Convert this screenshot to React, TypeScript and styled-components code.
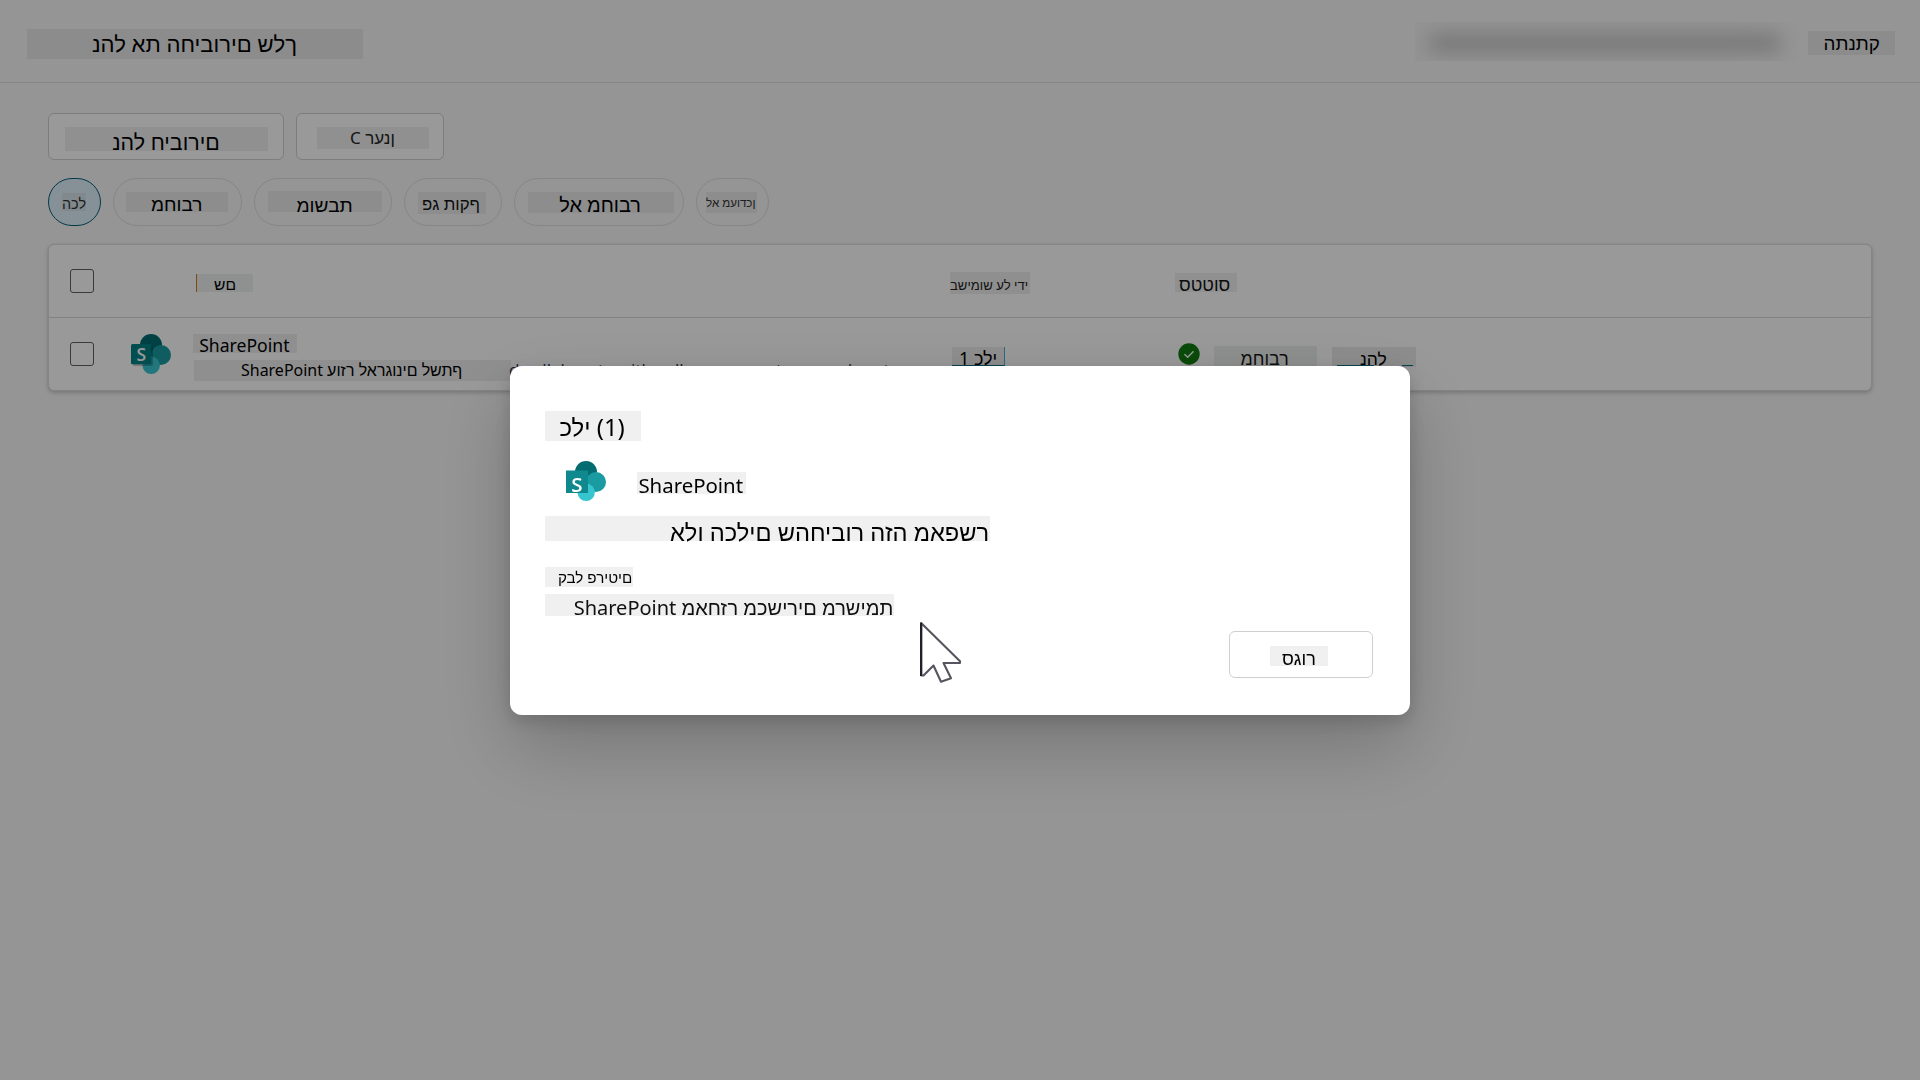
import React from 'react';
import styled, { createGlobalStyle } from 'styled-components';

const GlobalStyle = createGlobalStyle`
  * { box-sizing: border-box; }
  html, body { margin: 0; padding: 0; }
  body {
    background: #f8f8f8;
    font-family: "Noto Sans", "Liberation Sans", sans-serif;
    color: #000;
    overflow: hidden;
  }
`;

const Page = styled.div`
  width: 1920px;
  height: 1080px;
  display: flex;
  flex-direction: column;
  overflow: hidden;
  background: #f8f8f8;
`;

/* A caption on its own tinted strip; base is the baseline measured from the strip's top. */
interface StripProps {
  $w: number;
  $h: number;
  $x: number;
  $base: number;
  $size: number;
  $bg?: string;
  $mt?: number;
  $ml?: number;
  $ink?: string;
}

const Strip = styled.div<StripProps>`
  flex: none;
  width: ${(p) => p.$w}px;
  height: ${(p) => p.$h}px;
  margin: ${(p) => p.$mt ?? 0}px 0 0 ${(p) => p.$ml ?? 0}px;
  padding-left: ${(p) => p.$x}px;
  background: ${(p) => p.$bg ?? '#f0f0f0'};
  color: ${(p) => p.$ink ?? '#000'};
  font-size: ${(p) => p.$size}px;
  line-height: ${(p) => (2 * (p.$base - 0.388 * p.$size)).toFixed(2)}px;
  direction: ltr;
  unicode-bidi: bidi-override;
  white-space: nowrap;
`;

const NameHeading = styled(Strip)`
  border-left: 1px solid #d9751c;
`;

const ToolLink = styled(Strip)`
  border-right: 1px solid #45b4dc;
  border-bottom: 1px solid #0b6f8c;
`;

const ManageLink = styled(Strip)`
  background-image: linear-gradient(#0b6f8c, #0b6f8c), linear-gradient(#0b6f8c, #0b6f8c);
  background-repeat: no-repeat;
  background-size: 37px 1px, 11px 1px;
  background-position: 5px 18px, 70px 18px;
`;

const TopBar = styled.header`
  flex: none;
  display: flex;
  align-items: flex-start;
  height: 83px;
  padding: 0 25px 0 27px;
  border-bottom: 1px solid #dfdfdf;
`;

const Account = styled.div`
  display: flex;
  align-items: center;
  width: 387px;
  height: 39px;
  margin: 22px 6px 0 auto;
  padding-left: 14px;
  background: linear-gradient(90deg, #f5f5f5 80%, #f8f8f8);
  overflow: hidden;
`;

const AccountBlur = styled.div`
  width: 352px;
  height: 20px;
  margin-top: 3px;
  background: #cacaca;
  border-radius: 8px;
  filter: blur(9px);
`;

const Main = styled.main`
  display: flex;
  flex-direction: column;
  gap: 18px;
  padding: 30px 48px 0;
`;

const Cluster = styled.div`
  display: flex;
  gap: 12px;
`;

const Button = styled.button<{ $w: number; $edge?: string }>`
  display: flex;
  align-items: flex-start;
  width: ${(p) => p.$w}px;
  height: 47px;
  padding: 0;
  background: #fff;
  border: 1px solid ${(p) => p.$edge ?? '#d1d1d1'};
  border-radius: 6px;
  font-family: inherit;
  text-align: left;
`;

const Pill = styled.button<{ $w: number; $active?: boolean }>`
  display: flex;
  align-items: flex-start;
  width: ${(p) => p.$w}px;
  height: 48px;
  padding: 0;
  background: ${(p) => (p.$active ? '#def2fb' : 'transparent')};
  border: 1px solid ${(p) => (p.$active ? '#07607c' : '#e0e0e0')};
  border-radius: 24px;
  font-family: inherit;
  text-align: left;
`;

const Table = styled.section`
  border: 1px solid #dedede;
  border-radius: 6px;
  background: #fff;
  box-shadow: 0 2px 4px rgba(0, 0, 0, 0.18), 0 0 2px rgba(0, 0, 0, 0.1);
  overflow: hidden;
`;

const Row = styled.div<{ $head?: boolean }>`
  display: grid;
  grid-template-columns: 82px 62px 757px 224px 1fr;
  height: ${(p) => (p.$head ? 73 : 72)}px;
  border-bottom: ${(p) => (p.$head ? '1px solid #d9d9d9' : 'none')};
`;

const Cell = styled.div`
  display: flex;
  align-items: flex-start;
  min-width: 0;
`;

const NameCell = styled.div`
  display: flex;
  flex-direction: column;
  gap: 7px;
  min-width: 0;
  padding-top: 16px;
`;

const Line = styled.div`
  display: flex;
`;

const Check = styled.span`
  width: 24px;
  height: 24px;
  margin: 24px 0 0 21px;
  border: 1px solid #616161;
  border-radius: 3px;
`;

const Overflowing = styled.span`
  margin-left: -2px;
  font: 17.1px/19.4px "Open Sans", sans-serif;
  white-space: nowrap;
  color: #2b3350;
`;

const IconSlot = styled.div<{ $mt?: number; $ml?: number }>`
  flex: none;
  display: flex;
  margin: ${(p) => p.$mt ?? 0}px 0 0 ${(p) => p.$ml ?? 0}px;
`;

const Backdrop = styled.div`
  position: fixed;
  inset: 0;
  display: flex;
  align-items: flex-start;
  justify-content: center;
  padding-top: 366px;
  background: rgba(0, 0, 0, 0.4);
`;

const Dialog = styled.div`
  display: flex;
  flex-direction: column;
  width: 900px;
  height: 349px;
  padding: 45px 37px 37px 35px;
  background: #fff;
  border-radius: 12px;
  box-shadow: 0 6px 18px rgba(0, 0, 0, 0.16), 0 32px 76px rgba(0, 0, 0, 0.21);
`;

const ToolRow = styled.div`
  display: flex;
  margin: 20px 0 15px;
  padding-left: 21px;
  height: 40px;
`;

const Footer = styled.div`
  display: flex;
  justify-content: flex-end;
  margin-top: 15px;
`;

const Pointer = styled.svg`
  position: fixed;
  left: 916px;
  top: 618px;
`;

const SharePointIcon = ({ large }: { large?: boolean }) => (
  <svg width="40" height="40" viewBox="0 0 40 40">
    <circle cx="20" cy="11" r="11" fill="#036c70" />
    <circle cx="30" cy="21" r="10" fill="#1a9ba1" />
    <circle cx="20.2" cy="31.3" r="8.7" fill="#37c6d0" />
    {large ? (
      <rect x="0" y="9.5" width="22" height="22.5" fill="#0f898d" />
    ) : (
      <>
        <rect x="1.5" y="11.5" width="20.5" height="20.5" rx="2" fill="#000" opacity="0.22" />
        <rect x="0" y="10" width="20.3" height="20.3" rx="1.5" fill="#038387" />
      </>
    )}
    <text
      x={large ? 11 : 10.2}
      y={large ? 31 : 26.7}
      textAnchor="middle"
      fontFamily="Open Sans, sans-serif"
      fontWeight="600"
      fontSize={large ? 20.5 : 17.5}
      fill="#fff"
    >
      S
    </text>
  </svg>
);

export default function App() {
  return (
    <>
      <GlobalStyle />
      <Page>
        <TopBar>
          <Strip $w={336} $h={30} $mt={29} $x={65} $base={23.2} $size={22.1} $bg="#e9e9e9">נהל את החיבורים שלך</Strip>
          <Account><AccountBlur /></Account>
          <Strip $w={87} $h={24} $mt={31} $x={15.6} $base={20} $size={18.8} $bg="#e9e9e9">התנתק</Strip>
        </TopBar>
        <Main>
          <Cluster>
            <Button $w={236}>
              <Strip $w={203} $h={24} $mt={13} $ml={16} $x={47.3} $base={23.7} $size={21.4} $bg="#f1f1f1">נהל חיבורים</Strip>
            </Button>
            <Button $w={148}>
              <Strip $w={112} $h={22} $mt={13} $ml={20} $x={33} $base={17.5} $size={17} $bg="#f1f1f1" $ink="#262626">C רענן</Strip>
            </Button>
          </Cluster>
          <Cluster>
            <Pill $w={53} $active>
              <Strip $w={24} $h={18} $mt={14} $ml={13} $x={0} $base={16.5} $size={14.4} $bg="#d7e5ec" $ink="#333">הכל</Strip>
            </Pill>
            <Pill $w={129}>
              <Strip $w={102} $h={20} $mt={13} $ml={12} $x={25} $base={20.3} $size={19} $bg="#ebebeb">מחובר</Strip>
            </Pill>
            <Pill $w={138}>
              <Strip $w={114} $h={21} $mt={12} $ml={13} $x={28.5} $base={21.5} $size={19.1} $bg="#ebebeb">מושבת</Strip>
            </Pill>
            <Pill $w={98}>
              <Strip $w={68} $h={22} $mt={13} $ml={13} $x={4} $base={18.3} $size={16.8} $bg="#ebebeb" $ink="#141414">פג תוקף</Strip>
            </Pill>
            <Pill $w={170}>
              <Strip $w={146} $h={21} $mt={13} $ml={13} $x={31.3} $base={21} $size={19.9} $bg="#ebebeb">לא מחובר</Strip>
            </Pill>
            <Pill $w={73}>
              <Strip $w={51} $h={21} $mt={13} $ml={9} $x={0} $base={15.3} $size={11.6} $bg="#ebebeb" $ink="#333">לא מעודכן</Strip>
            </Pill>
          </Cluster>
          <Table>
            <Row $head>
              <Cell><Check /></Cell>
              <Cell />
              <Cell>
                <NameHeading $w={57} $h={18} $mt={29} $ml={3} $x={17} $base={16.8} $size={15.6} $bg="#eff2f2">שם</NameHeading>
              </Cell>
              <Cell>
                <Strip $w={80} $h={22} $mt={27} $x={0} $base={18.5} $size={13.1} $bg="#efefef" $ink="#222">בשימוש על ידי</Strip>
              </Cell>
              <Cell>
                <Strip $w={62} $h={19} $mt={28} $ml={1} $x={4} $base={18.5} $size={17.8} $bg="#f0f0f0" $ink="#141414">סטטוס</Strip>
              </Cell>
            </Row>
            <Row>
              <Cell><Check /></Cell>
              <Cell><IconSlot $mt={16}><SharePointIcon /></IconSlot></Cell>
              <NameCell>
                <Strip $w={104} $h={19} $x={6.2} $base={18.7} $size={17.6} $bg="#efefef">SharePoint</Strip>
                <Line>
                  <Strip $w={317} $h={21} $ml={1} $x={47} $base={17} $size={15.98} $bg="#efefef">SharePoint עוזר לארגונים לשתף</Strip>
                  <Overflowing>d collaborate with colleagues, partners and customers</Overflowing>
                </Line>
              </NameCell>
              <Cell>
                <ToolLink $w={53} $h={19} $mt={29} $ml={2} $x={7} $base={18} $size={18} $bg="#eee">1 כלי</ToolLink>
              </Cell>
              <Cell>
                <IconSlot $mt={25} $ml={4}>
                  <svg width="22" height="22" viewBox="0 0 22 22">
                    <circle cx="11" cy="11" r="10.7" fill="#107c10" />
                    <path d="M6.8 11.4l2.9 2.9 5.4-5.6" fill="none" stroke="#fff" strokeWidth="1.4" strokeLinecap="round" strokeLinejoin="round" />
                  </svg>
                </IconSlot>
                <Strip $w={103} $h={20} $mt={28} $ml={14} $x={26.5} $base={19.5} $size={17.8} $bg="#edf0ef" $ink="#181818">מחובר</Strip>
                <ManageLink $w={84} $h={20} $mt={29} $ml={15} $x={28} $base={18} $size={17.5} $bg="#ebebeb">נהל</ManageLink>
              </Cell>
            </Row>
          </Table>
        </Main>
      </Page>
      <Backdrop>
        <Dialog>
          <Strip $w={96} $h={30} $x={14.4} $base={25.4} $size={24}>כלי (1)</Strip>
          <ToolRow>
            <SharePointIcon large />
            <Strip $w={109} $h={22} $mt={11} $ml={31} $x={1.4} $base={21.3} $size={20.4}>SharePoint</Strip>
          </ToolRow>
          <Strip $w={445} $h={25} $x={125} $base={25.3} $size={23.7}>אלו הכלים שהחיבור הזה מאפשר</Strip>
          <Strip $w={88} $h={20} $mt={26} $x={12.9} $base={16.6} $size={15.2}>קבל פריטים</Strip>
          <Strip $w={349} $h={22} $mt={7} $x={28.7} $base={21.7} $size={20} $ink="#101010">SharePoint מאחזר מכשירים מרשימת</Strip>
          <Footer>
            <Button $w={144} $edge="#cfcfcf">
              <Strip $w={58} $h={20} $mt={14} $ml={40} $x={12} $base={19.2} $size={18.1}>סגור</Strip>
            </Button>
          </Footer>
        </Dialog>
      </Backdrop>
      <Pointer width="50" height="70" viewBox="916 618 50 70">
        <path
          d="M921.4 623.2L960 661.2V663H943.5L951 678.3L941 681.7L933.5 665.5L923.5 675.5H921.4Z"
          fill="#fff"
          stroke="#55555f"
          strokeWidth="2.1"
          strokeLinejoin="round"
        />
        <path d="M921 622.5V676" stroke="#20202a" strokeWidth="2" />
      </Pointer>
    </>
  );
}
